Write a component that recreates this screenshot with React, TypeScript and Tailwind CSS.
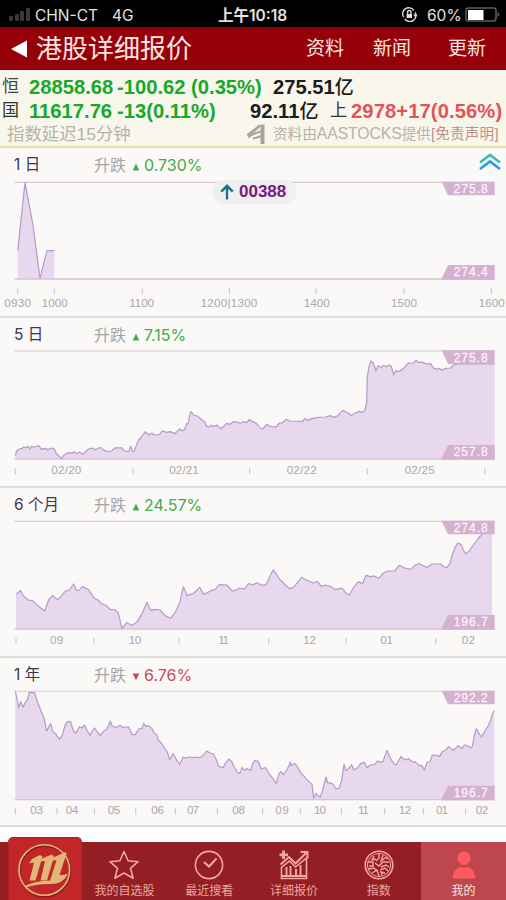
import React from "react";

type Chart = {
  title: string;
  change: string;
  up: boolean;
  high: string;
  low: string;
  top: number;
  base: number;
  labelY: number;
  tickY: number;
  points: string;
  ticks: number[];
  labels: [number, string, number][];
};

const charts: Chart[] = [
  {
    title: "1 日",
    change: "0.730%",
    up: true,
    high: "275.8",
    low: "274.4",
    top: 112,
    base: 402,
    labelY: 487,
    tickY: 428,
    points: "53,318 75,113 99,240 120,400 141,317 163,317",
    ticks: [53, 163, 427, 688, 948, 1212, 1474],
    labels: [
      [53, "0930", 80], [164, "1000", 78], [425, "1100", 74], [687, "1200|1300", 170],
      [950, "1400", 78], [1212, "1500", 78], [1475, "1600", 78],
    ],
  },
  {
    title: "5 日",
    change: "7.15%",
    up: true,
    high: "275.8",
    low: "257.8",
    top: 108,
    base: 432,
    labelY: 478,
    tickY: 459,
    points:
      "46,422 50,408 58,402 66,400 72,396 80,398 84,393 90,402 94,394 104,396 116,392 124,403 134,400 144,404 156,399 163,403 170,418 178,424 184,431 192,420 204,413 216,415 222,410 230,416 238,411 248,418 258,408 266,402 278,399 286,404 296,399 304,398 312,406 322,409 334,408 346,398 356,399 364,398 374,408 386,410 392,394 397,408 402,410 410,388 416,375 424,366 436,350 446,360 456,354 462,360 478,359 488,347 498,352 512,350 526,356 532,348 540,342 546,347 554,344 560,326 564,327 570,296 574,290 580,300 592,303 602,312 614,320 620,334 626,336 634,331 644,334 650,330 662,341 672,333 680,325 690,328 700,320 714,322 720,325 730,320 740,323 748,313 758,320 768,324 780,338 788,342 800,328 810,334 828,336 838,324 846,324 858,313 870,318 908,319 915,310 922,316 936,311 952,307 976,306 990,302 1002,307 1014,302 1022,292 1029,286 1038,292 1046,294 1053,302 1066,294 1078,289 1088,292 1095,286 1100,262 1102,184 1107,156 1113,138 1120,144 1128,168 1134,152 1144,157 1150,151 1160,155 1168,150 1174,154 1181,180 1187,167 1197,170 1211,160 1225,144 1242,144 1248,135 1254,142 1268,142 1280,147 1292,146 1300,159 1312,163 1318,160 1326,166 1336,160 1352,159 1362,149 1376,147 1484,147",
    ticks: [46, 399, 749, 1102, 1454],
    labels: [[199, "02/20", 90], [552, "02/21", 88], [905, "02/22", 90], [1259, "02/25", 90]],
  },
  {
    title: "6 个月",
    change: "24.57%",
    up: true,
    high: "274.8",
    low: "196.7",
    top: 109,
    base: 432,
    labelY: 477,
    tickY: 458,
    points:
      "48,328 62,317 70,332 84,345 98,347 112,361 134,378 146,345 158,331 172,344 182,336 196,318 208,315 221,297 230,317 238,315 246,305 266,314 282,339 294,345 304,356 316,360 332,374 344,374 354,382 366,430 380,413 396,421 412,410 428,382 441,352 452,376 464,373 480,375 496,392 512,400 528,378 540,350 550,305 562,332 582,324 599,307 611,328 622,323 632,317 646,313 658,299 680,300 696,317 706,316 718,310 734,311 746,296 759,300 771,293 782,299 794,301 800,296 808,278 819,255 828,266 838,282 856,300 868,311 880,307 893,292 905,277 914,282 926,288 942,294 952,289 964,304 976,300 990,304 1006,314 1018,311 1026,309 1038,325 1048,330 1060,309 1075,290 1088,296 1098,271 1112,275 1122,273 1136,280 1150,264 1164,258 1184,258 1198,241 1214,249 1232,253 1246,240 1259,236 1270,243 1282,247 1296,237 1322,237 1330,245 1342,247 1350,234 1358,206 1367,184 1373,174 1384,179 1390,195 1397,207 1408,197 1421,179 1434,162 1446,148 1462,125 1476,112",
    ticks: [48, 282, 537, 806, 1038, 1307],
    labels: [[170, "09", 40], [405, "10", 37], [671, "11", 32], [929, "12", 38], [1160, "01", 38], [1405, "02", 40]],
  },
  {
    title: "1 年",
    change: "6.76%",
    up: false,
    high: "292.2",
    low: "196.7",
    top: 109,
    base: 434,
    labelY: 477,
    tickY: 459,
    points:
      "46,109 50,126 56,158 62,140 70,156 76,142 82,134 88,112 104,113 112,140 124,170 132,188 140,228 152,205 158,230 166,235 178,253 188,238 194,214 202,200 212,200 220,228 228,234 238,215 246,219 254,210 262,228 270,241 276,229 284,219 292,231 301,242 310,229 320,224 326,211 331,198 336,212 348,218 360,211 368,217 386,216 396,239 406,239 416,222 426,220 431,205 438,214 446,212 456,221 464,237 470,238 476,256 486,267 494,281 502,291 509,314 520,296 530,315 539,328 550,306 558,310 568,305 576,309 584,306 598,308 608,303 620,288 630,294 640,297 648,312 656,334 670,338 676,325 687,312 696,321 704,339 712,352 720,355 726,337 734,346 740,341 752,346 759,324 764,317 774,318 784,342 796,338 806,354 818,370 829,386 837,356 843,350 850,360 860,345 868,330 870,321 875,332 883,325 890,332 902,353 918,371 936,388 941,429 948,416 960,427 968,406 978,366 983,384 990,383 998,387 1009,402 1017,400 1025,376 1032,328 1038,347 1048,339 1055,329 1061,345 1073,338 1083,325 1093,322 1101,338 1111,330 1125,327 1133,318 1141,322 1149,319 1161,286 1169,306 1181,326 1189,330 1195,318 1203,305 1215,315 1225,311 1235,319 1247,322 1259,333 1265,330 1273,345 1281,323 1291,318 1297,300 1309,301 1319,304 1327,290 1339,284 1345,275 1361,286 1375,271 1385,281 1393,270 1403,272 1411,278 1417,275 1423,241 1429,221 1437,236 1445,246 1455,228 1466,210 1472,196 1477,177 1483,167",
    ticks: [46, 171, 283, 407, 526, 652, 788, 901, 1024, 1154, 1270, 1397],
    labels: [
      [110, "03", 38], [216, "04", 38], [342, "05", 38], [473, "06", 38], [579, "07", 36], [716, "08", 38],
      [846, "09", 40], [960, "10", 36], [1090, "11", 32], [1215, "12", 38], [1326, "01", 36], [1446, "02", 38],
    ],
  },
];

/* Drawn in thirds of a pixel: 1518 units span the full 506px width. */
function ChartArea({ c, index }: { c: Chart; index: number }) {
  const xs = c.points.split(" ").map((p) => p.split(",")[0]);
  const area = `${xs[0]},${c.base} ${c.points} ${xs[xs.length - 1]},${c.base}`;
  const lowTop = c.base - 42;
  return (
    <svg className="block h-[138px] w-[506px] shrink-0 font-['Liberation_Sans',Arial,sans-serif]" viewBox="0 99 1518 414">
      <path d={`M44 ${c.top}H1484`} stroke={index % 2 === 0 ? "#d9c6d3" : "#dfd7dc"} strokeWidth="4" />
      <polygon points={area} fill="#e7d8ee" />
      <path d={`M44 ${c.base}H1484`} stroke="#dcc0da" strokeWidth="4" />
      <polyline points={c.points} fill="none" stroke="#b59ac9" strokeWidth="3.6" strokeLinejoin="round" />
      <polygon points={`1325,${c.top - 2} 1484,${c.top - 2} 1484,${c.top + 39} 1344,${c.top + 39}`} fill="#d5b1d1" />
      <polygon points={`1344,${lowTop} 1484,${lowTop} 1484,${c.base + 2} 1323,${c.base + 2}`} fill="#d5b1d1" />
      <g fill="#fbf4fa" stroke="#fbf4fa" strokeWidth="0.8" fontSize="36">
        <text x="1361" y={c.top + 33} textLength="102">{c.high}</text>
        <text x="1361" y={lowTop + 34} textLength="102">{c.low}</text>
      </g>
      {c.ticks.map((x) => (
        <path key={x} d={`M${x} ${c.tickY}v20`} stroke="#cfcccf" strokeWidth="3.5" />
      ))}
      <g fill="#a9a7a9" fontSize="35">
        {c.labels.map(([x, text, w]) => (
          <text key={x} x={x - w / 2} y={c.labelY} textLength={w}>{text}</text>
        ))}
      </g>
    </svg>
  );
}

function StatusBar() {
  return (
    <div className="flex h-[27px] shrink-0 items-center bg-black pt-[4px] font-['Inter','Noto_Sans_CJK_SC',sans-serif] text-[15.5px] text-[#e2e2e2]">
      <div className="mt-[-2px] ml-[9px] flex h-[13px] w-[26px] shrink-0 items-end gap-[1.5px]">
        <i className="h-[5px] w-[4px] rounded-[1px] bg-[#383838]" />
        <i className="h-[7px] w-[4px] rounded-[1px] bg-[#383838]" />
        <i className="h-[10px] w-[4px] rounded-[1px] bg-[#383838]" />
        <i className="h-[13px] w-[4px] rounded-[1px] bg-[#383838]" />
      </div>
      <span className="w-[77px] shrink-0 whitespace-nowrap">CHN-CT</span>
      <span className="w-[106px] shrink-0">4G</span>
      <span className="w-[183px] shrink-0 whitespace-nowrap font-semibold">上午10:18</span>
      <svg className="mt-[-2px] w-[17px] shrink-0" viewBox="0 0 17 15" height="15" fill="none" stroke="#dedede" strokeWidth="1.4">
        <path d="M2.6 10A6 6 0 0 1 12.8 3.6M14 5.4A6 6 0 0 1 3.8 11.8" />
        <path d="M12 7.4h4.6L14.3 10z" fill="#dedede" stroke="none" />
        <path d="M5.6 7h5.4v4H5.6z" fill="#dedede" stroke="none" />
        <path d="M6.6 7V5.2a1.7 1.7 0 0 1 3.4 0V7" />
      </svg>
      <span className="ml-[9px] w-[38px] shrink-0 whitespace-nowrap">60%</span>
      <svg width="35" height="16" viewBox="0 0 35 16" className="mt-[-2px] shrink-0">
        <rect x="1" y="1" width="30" height="13" rx="2.5" fill="none" stroke="#5c5c5c" strokeWidth="1.6" />
        <rect x="3" y="3" width="15.5" height="10" rx="0.5" fill="#fff" />
        <path d="M32.500 4.500l2.200 3-2.200 3z" fill="#5c5c5c" />
      </svg>
    </div>
  );
}

function NavBar() {
  return (
    <div className="flex h-[43px] shrink-0 items-center bg-[#960009] pt-[2px] text-[#f8e6e1]">
      <svg width="16" height="18" viewBox="0 0 16 18" className="mt-[-1px] ml-[11px] shrink-0">
        <path d="M0 9L16 .5v17z" fill="#fff" />
      </svg>
      <h1 className="ml-[9px] w-[270px] whitespace-nowrap text-[26px] leading-[41px]">港股详细报价</h1>
      <span className="w-[67px] text-[19px]">资料</span>
      <span className="w-[75px] text-[19px]">新闻</span>
      <span className="whitespace-nowrap text-[19px]">更新</span>
    </div>
  );
}

function IndexPanel() {
  return (
    <div className="flex h-[78px] shrink-0 flex-col whitespace-nowrap border-b-2 border-[#e3e2ad] bg-[#f9f7ec] pt-[5px] pl-[2px] text-[20.2px] font-bold text-[#1c1c1c]">
      <div className="flex h-[24px] items-center leading-[24px]">
        <span className="w-[27px] text-[17px] font-normal text-[#444]">恒</span>
        <span className="w-[88px] text-[#17a92b]">28858.68</span>
        <span className="w-[156px] text-[#17a92b]">-100.62 (0.35%)</span>
        <span>275.51<span className="text-[19px] font-medium">亿</span></span>
      </div>
      <div className="flex h-[24px] items-center leading-[24px]">
        <span className="w-[27px] text-[17px] font-normal text-[#333]">国</span>
        <span className="w-[88px] text-[#17a92b]">11617.76</span>
        <span className="w-[133px] text-[#17a92b]">-13(0.11%)</span>
        <span className="w-[80px]">92.11<span className="text-[19px] font-medium">亿</span></span>
        <span className="w-[21px] text-[17px] font-normal text-[#333]">上</span>
        <span className="tracking-[0.1px] text-[#e4525a]">2978+17(0.56%)</span>
      </div>
      <div className="flex h-[22px] items-center text-[14.6px] leading-[22px] font-normal text-[#b3b2ac]">
        <span className="ml-[5px] w-[239px] text-[17.4px]">指数延迟15分钟</span>
        <svg width="20" height="22" viewBox="0 0 20 22" className="mr-[7px] shrink-0" fill="none" stroke="#a6a49d">
          <path d="M1.500 12.500Q9 7 14 2.500" strokeWidth="3" />
          <path d="M2 14.500Q8 10 15 8.500M7 15.500l9-2.500" strokeWidth="2" />
          <path d="M16.500 1.500V21" strokeWidth="4" />
        </svg>
        <span>资料由<span className="text-[15.8px] tracking-[-0.1px]">AASTOCKS</span>提供<span className="tracking-[0.2px] text-[#bd8f8c]">[免责声明]</span></span>
      </div>
    </div>
  );
}

function TabItem({ label, active, children }: { label: string; active?: boolean; children: React.ReactNode }) {
  return (
    <div className={`flex flex-1 flex-col items-center ${active ? "bg-[#bd474c] text-[#ffe4e2]" : "text-[#eca7a1]"}`}>
      <svg width="32" height="32" viewBox="0 0 32 32" className="mt-[7px] shrink-0" fill="none" stroke="#f3a8a0" strokeWidth="1.6">
        {children}
      </svg>
      <span className="mt-[2px] whitespace-nowrap text-[12px] leading-[17px]">{label}</span>
    </div>
  );
}

function TabBar() {
  return (
    <div className="flex h-[58px] shrink-0 bg-[#931e24]">
      <div className="flex w-[82px] shrink-0 justify-end">
        <div className="-mt-[5px] flex h-[63px] w-[74px] justify-center rounded-t-[5px] border border-b-0 border-[#ae2024] bg-[#c32628]">
          <svg width="56" height="56" viewBox="0 0 56 56" className="mt-[5px]">
            <circle cx="28" cy="28.300" r="25.300" fill="none" stroke="#8d1d1c" strokeWidth="2" />
            <circle cx="27.300" cy="27" r="25.300" fill="none" stroke="#dfb876" strokeWidth="1.600" />
            <g fill="#dfb876">
              <path d="M12 20.500L15 16l8-4 2.500 1.500L18.500 37.500h-6L17 19.500z" />
              <path d="M22.500 18.500L26 15l9-3.500 2 2L30 37.500h-6.500L28 18z" />
              <path d="M34 18l3.500-4L48.500 9l1 1.500L42.500 32q4 .5 8.500-1.500-3 7-12 8.500l-6-1L39.500 17z" />
              <path d="M7 43.500Q18 37 36 37.500L50 32Q46 41.500 32 41 18 41 9 44.500z" />
            </g>
          </svg>
        </div>
      </div>
      <TabItem label="我的自选股">
        <path d="M16 2.500l4.100 9.300 10 .9-7.600 6.700 2.600 9.800L16 24l-9.100 5.200 2.600-9.800-7.600-6.700 10-.9z" strokeLinejoin="round" />
      </TabItem>
      <TabItem label="最近搜看">
        <circle cx="16" cy="16" r="13.600" />
        <path d="M11 13l5 4.500 7.500-8" strokeWidth="2" />
      </TabItem>
      <TabItem label="详细报价">
        <path d="M3.500 29.500V18.500l8-6.500 6 6L28.500 9v20.500z" />
        <path d="M2.500 15.500L11 8l6.500 6.500L28.500 3.500M22.500 3h7v6.500" strokeWidth="2" />
        <path d="M5.500 1.500v8.500M1.500 5.800h8.500" strokeWidth="2.800" />
        <path d="M8.500 18v8.500M12.500 17v9.500M18 20v6.500M22.500 16v10.500M3 27h26" strokeWidth="1.900" />
      </TabItem>
      <TabItem label="指数">
        <circle cx="16" cy="16" r="13.800" />
        <circle cx="16" cy="16" r="11.600" strokeWidth="1" />
        <path d="M16 5v4l-3 3M20 6l-2 6 4-3M11 7l-2 4 4-1M5 13h5v4H6M12 14l4 3 4-4 6 0M5 20l6-1 3 3M9 24l5-3 2 6M18 18l5-2 3 2M17 21l5-2 3 3M19 26l-1-3 4 1M22 8l3 2" strokeWidth="1.400" />
      </TabItem>
      <TabItem label="我的" active>
        <circle cx="16" cy="9.300" r="6.700" fill="#ff5a60" stroke="none" />
        <path d="M4.500 29.500C5 22.500 9 18 13 17.800c2 1.200 4 1.200 6 0 4 .2 8 4.700 8.500 11.700z" fill="#ff5a60" stroke="none" />
      </TabItem>
    </div>
  );
}

export default function App() {
  return (
    <div className="flex h-[900px] w-[506px] flex-col overflow-hidden bg-white font-['Liberation_Sans','Noto_Sans_CJK_SC',sans-serif]">
      <StatusBar />
      <NavBar />
      <IndexPanel />
      <main className="relative flex flex-col bg-[#faf9f8]">
        {charts.map((c, i) => (
          <section key={c.title} className={`flex flex-col overflow-hidden border-b-2 border-[#dddddd] ${i === 3 ? "h-[169px]" : "h-[170px]"}`}>
            <div className="flex h-[30px] shrink-0 items-center whitespace-nowrap pt-[4px] font-['Inter','Noto_Sans_CJK_SC',sans-serif] text-[15.5px] leading-[26px]">
              <h2 className="ml-[14px] w-[80px] text-[#40354c]">{c.title}</h2>
              <span className="w-[38px] text-[16px] text-[#a5a4a5]">升跌</span>
              <svg width="8" height="8" viewBox="0 0 8 8" className="mt-[4px] mr-[4px]">
                <path d={c.up ? "M4 .5L7.300 7.500H.7z" : "M4 7.500L7.300 .5H.7z"} fill={c.up ? "#41ad47" : "#c94a58"} />
              </svg>
              <span className={`text-[16px] ${c.up ? "text-[#41ad47]" : "text-[#c94a58]"}`}>{c.change}</span>
            </div>
            <ChartArea c={c} index={i} />
          </section>
        ))}
        <div className="absolute top-[32px] left-[212px] flex h-[24px] w-[85px] items-center rounded-full bg-[#efeff0] pl-[8px] text-[17px] font-bold text-[#7b1683]">
          <svg width="14" height="16" viewBox="0 0 14 16" className="mr-[5px] shrink-0" fill="none" stroke="#1c7388" strokeWidth="2.400">
            <path d="M7 15.500V2M1.300 7.600L7 1.800l5.700 5.800" />
          </svg>
          00388
        </div>
        <svg width="24" height="18" viewBox="0 0 24 18" className="absolute top-[5px] left-[478px]" fill="none" strokeWidth="2.700">
          <path d="M2 9.500L12 2l10 7.500" stroke="#3cb9b9" />
          <path d="M2 16L12 8.500 22 16" stroke="#299fdc" />
        </svg>
      </main>
      <div className="flex-1 bg-[#fdfdfd]" />
      <TabBar />
    </div>
  );
}
